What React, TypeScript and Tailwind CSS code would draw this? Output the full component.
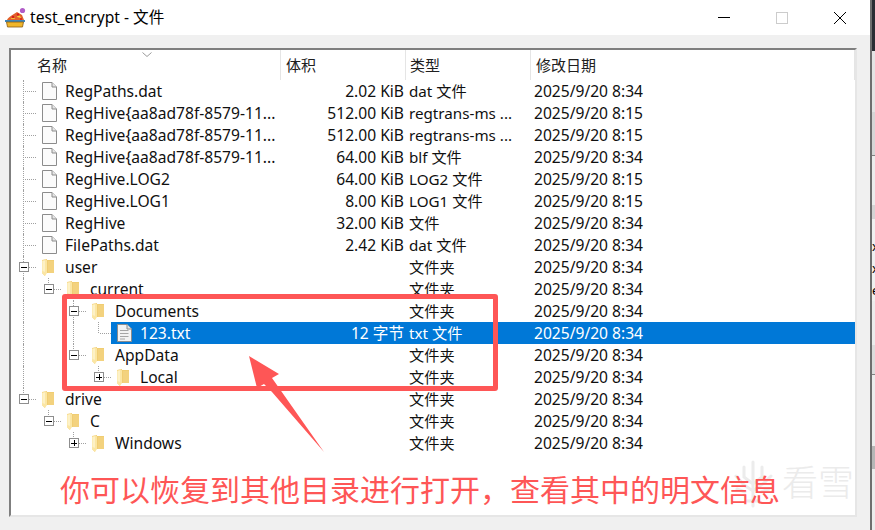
import React from "react";

type Row = {
  d: number;
  n: string;
  s?: string;
  t: string;
  dt: string;
  k: "f" | "d" | "t";
  b?: "-" | "+";
  sel?: boolean;
  full?: number[];
  half?: number;
};
const D = "2025/9/20 8:34";
const E = "2025/9/20 8:15";
const rows: Row[] = [
  { d: 0, n: "RegPaths.dat", s: "2.02 KiB", t: "dat 文件", dt: D, k: "f", full: [0] },
  { d: 0, n: "RegHive{aa8ad78f-8579-11...", s: "512.00 KiB", t: "regtrans-ms ...", dt: E, k: "f", full: [0] },
  { d: 0, n: "RegHive{aa8ad78f-8579-11...", s: "512.00 KiB", t: "regtrans-ms ...", dt: E, k: "f", full: [0] },
  { d: 0, n: "RegHive{aa8ad78f-8579-11...", s: "64.00 KiB", t: "blf 文件", dt: D, k: "f", full: [0] },
  { d: 0, n: "RegHive.LOG2", s: "64.00 KiB", t: "LOG2 文件", dt: E, k: "f", full: [0] },
  { d: 0, n: "RegHive.LOG1", s: "8.00 KiB", t: "LOG1 文件", dt: E, k: "f", full: [0] },
  { d: 0, n: "RegHive", s: "32.00 KiB", t: "文件", dt: D, k: "f", full: [0] },
  { d: 0, n: "FilePaths.dat", s: "2.42 KiB", t: "dat 文件", dt: D, k: "f", full: [0] },
  { d: 0, n: "user", t: "文件夹", dt: D, k: "d", b: "-", full: [0] },
  { d: 1, n: "current", t: "文件夹", dt: D, k: "d", b: "-", full: [0], half: 1 },
  { d: 2, n: "Documents", t: "文件夹", dt: D, k: "d", b: "-", full: [0, 2] },
  { d: 3, n: "123.txt", s: "12 字节", t: "txt 文件", dt: D, k: "t", sel: true, full: [0, 2], half: 3 },
  { d: 2, n: "AppData", t: "文件夹", dt: D, k: "d", b: "-", full: [0], half: 2 },
  { d: 3, n: "Local", t: "文件夹", dt: D, k: "d", b: "+", full: [0], half: 3 },
  { d: 0, n: "drive", t: "文件夹", dt: D, k: "d", b: "-", half: 0 },
  { d: 1, n: "C", t: "文件夹", dt: D, k: "d", b: "-", half: 1 },
  { d: 2, n: "Windows", t: "文件夹", dt: D, k: "d", b: "+", half: 2 },
];

function Icon({ k }: { k: Row["k"] }) {
  if (k === "d")
    return (
      <svg width="12" height="17" viewBox="0 0 12 17" className="mt-px">
        <path d="M0 1 L5 0 V1 H12 V14 H3 V17 L0 14 Z" fill="#f0cd72" />
        <path d="M6 2 H12 V14 H6 Z" fill="#f3d27e" />
        <path d="M0 1.5 L4 .5 L5 1.5 V14 L3 17 L0 14 Z" fill="#fbe6a4" />
        <path d="M.5 2 L3 1.5 V13 L.5 12 Z" fill="#fdf1c6" />
      </svg>
    );
  return (
    <svg width="15" height="18" viewBox="0 0 15 18">
      <path d="M.5 .5 H10 L14.5 5 V17.5 H.5 Z" fill={k === "t" ? "#f3f3f3" : "#fbfbfb"} stroke="#8c8c8c" />
      <path d="M10 .5 V5 H14.5" fill="#e6e6e6" stroke="#8c8c8c" />
      {k === "t" && <path d="M3 6.5H11.5M3 9.5H11.5M3 12.5H11.5M3 15H8" stroke="#a6a6a6" />}
    </svg>
  );
}

function Expander({ b }: { b: "-" | "+" }) {
  return (
    <span className="absolute top-[6px] left-0 z-10 flex w-[10px] h-[10px] items-center justify-center border border-[#8e8e8e] bg-white">
      <span className="absolute w-[6px] h-px bg-black" />
      {b === "+" && <span className="absolute w-px h-[6px] bg-black" />}
    </span>
  );
}

const V = "absolute w-0 top-0 border-l border-dotted border-[#a0a0a0]";

function TreeRow({ r }: { r: Row }) {
  const stub = 25 + r.d * 25;
  const own = 12 + r.d * 25;
  const band = r.sel ? "bg-[#0078d7]" : "";
  return (
    <div className={`flex h-[22px] items-center leading-[22px] text-[15.6px] ${r.sel ? "text-white" : "text-[#101010]"}`}>
      <div className="flex w-[270px] shrink-0 h-full">
        <div className="relative shrink-0 h-full" style={{ width: stub }}>
          {(r.full ?? []).map((l) => (
            <span key={l} className={`${V} h-[22px]`} style={{ left: 12 + l * 25 }} />
          ))}
          {r.half !== undefined && <span className={`${V} h-[11px]`} style={{ left: 12 + r.half * 25 }} />}
          <span className="absolute top-[11px] h-0 right-0 border-t border-dotted border-[#a0a0a0]" style={{ left: own + 2 }} />
          {r.b && (
            <span className="absolute top-0" style={{ left: own - 4 }}>
              <Expander b={r.b} />
            </span>
          )}
        </div>
        <div className={`flex flex-1 items-center h-full pl-[6px] ${band}`}>
          <span className="flex w-[17px] mr-[6px] shrink-0">
            <Icon k={r.k} />
          </span>
          <span className="whitespace-nowrap">{r.n}</span>
        </div>
      </div>
      <div className={`w-[125px] shrink-0 pr-[2px] text-right whitespace-nowrap h-full ${band}`}>{r.s}</div>
      <div className={`w-[125px] shrink-0 pl-[3px] whitespace-nowrap h-full text-[15.2px] ${band}`}>{r.t}</div>
      <div className={`flex-1 pl-[3px] whitespace-nowrap h-full ${band}`}>{r.dt}</div>
    </div>
  );
}

export default function App() {
  return (
    <div className="relative flex w-[875px] h-[530px] overflow-hidden bg-[#f0f0f0] font-['Noto_Sans','Noto_Sans_CJK_SC',sans-serif]">
      <div className="flex flex-col w-[870px] shrink-0">
        <div className="flex h-[35px] shrink-0 items-center bg-white">
          <svg width="21" height="21" viewBox="0 0 21 21" className="ml-[5px] mr-[4px]">
            <path d="M2 13 C3 10 8 8 12 5 L17 8 L19 13 Z" fill="#e2612a" />
            <path d="M6 12 C7 10 9 10 10 12 Z M12 10 C13 8 15 8 16 11 Z" fill="#f6cf3a" />
            <circle cx="8" cy="10" r="1.2" fill="#d41c1c" />
            <circle cx="13" cy="7.5" r="1.2" fill="#d41c1c" />
            <circle cx="16" cy="12" r="1" fill="#d41c1c" />
            <circle cx="17.5" cy="3.5" r="2.6" fill="#b05cc8" />
            <rect x="0" y="13" width="20" height="2" fill="#3c86bd" />
            <path d="M1.5 15 H18.5 L17.5 20 H2.5 Z" fill="#f0b62b" stroke="#8a5a12" strokeWidth=".8" />
          </svg>
          <span className="text-[15.6px] text-black">test_encrypt - 文件</span>
          <div className="ml-auto flex items-center h-full">
            <span className="w-[12px] h-px bg-black mr-[46px]" />
            <span className="w-[12px] h-[12px] border border-[#cccccc] mr-[46px]" />
            <svg width="12" height="12" viewBox="0 0 12 12" className="mr-[24px]">
              <path d="M0 0L12 12M12 0L0 12" stroke="#000" strokeWidth="1" />
            </svg>
          </div>
        </div>
        <div className="relative ml-[9px] mr-[13px] mt-[13px] h-[469px] bg-white border-t-2 border-l-2 border-t-[#7f7f7f] border-l-[#7f7f7f] border-r-2 border-b-2 border-r-[#e6e6e6] border-b-[#e6e6e6]">
          <svg width="10" height="5" viewBox="0 0 10 5" className="absolute left-[131px] top-[2px]">
            <path d="M.5 .5L5 4.5L9.5 .5" fill="none" stroke="#9a9a9a" />
          </svg>
          <div className="flex h-[30px] w-full items-center text-[15px] text-[#202020]">
            <div className="flex h-full w-[270px] shrink-0 items-center pl-[26px] border-r border-[#e5e5e5]">名称</div>
            <div className="flex h-full w-[125px] shrink-0 items-center pl-[5px] border-r border-[#e5e5e5]">体积</div>
            <div className="flex h-full w-[125px] shrink-0 items-center pl-[4px] border-r border-[#e5e5e5]">类型</div>
            <div className="flex h-full flex-1 items-center pl-[5px] border-r border-[#e5e5e5]">修改日期</div>
          </div>
          {rows.map((r, i) => (
            <TreeRow key={i} r={r} />
          ))}
        </div>
      </div>

      <div className="flex flex-col flex-1 border-l-2 border-[#6e6e6e] text-[13px] leading-[22px] text-black overflow-hidden">
        <div className="h-[51px] shrink-0 bg-[#2a2d33]" />
        <div className="h-[61px] shrink-0 bg-[#e4e4e4]" />
        <div className="h-[43px] shrink-0 bg-[#d6d6d6]" />
        <div className="h-[1px] shrink-0 bg-[#808080]" />
        <div className="h-[49px] shrink-0 bg-[#ececec]" />
        <div className="h-[14px] shrink-0 bg-[#d4d4d4]" />
        <div className="h-[16px] shrink-0" />
        <div className="h-[22px] shrink-0">x</div>
        <div className="h-[22px] shrink-0">x</div>
        <div className="h-[22px] shrink-0">e</div>
        <div className="h-[44px] shrink-0 bg-[#ececec]" />
        <div className="h-[29px] shrink-0 bg-[#dcdcdc]" />
        <div className="h-[1px] shrink-0 bg-[#808080]" />
        <div className="h-[71px] shrink-0 bg-[#ececec]" />
        <div className="h-[23px] shrink-0 bg-[#b6b6b6]" />
        <div className="flex-1 bg-[#ececec]" />
      </div>

      {/* watermark */}
      <svg width="44" height="50" viewBox="0 0 44 50" className="absolute left-[731px] top-[459px]" fill="none" stroke="#ececec" strokeWidth="3" strokeLinecap="round">
        <path d="M22 3V47M13 8V18L22 25L31 18V8M5 17L13 26L22 32L33 24L40 17M6 30L14 33M38 30L30 33M16 42H28" />
      </svg>
      <div className="absolute left-[782px] top-[457px] text-[36px] leading-[52px] font-light text-[#ebebeb] whitespace-nowrap">看雪</div>

      {/* annotation overlay */}
      <div className="absolute left-[62px] top-[294px] w-[436px] h-[97px] rounded-[3px] border-[5px] border-[#fe5656]" />
      <svg width="100" height="110" viewBox="0 0 100 110" className="absolute left-[240px] top-[350px]">
        <path d="M9 6 L39 24 L32 28 L84 102 L32 42 L24 34 L17 38 Z" fill="#fe5656" />
      </svg>
      <div className="absolute left-[60px] top-[471px] text-[30px] leading-[38px] text-[#fe5656] whitespace-nowrap">
        你可以恢复到其他目录进行打开，查看其中的明文信息
      </div>
    </div>
  );
}
